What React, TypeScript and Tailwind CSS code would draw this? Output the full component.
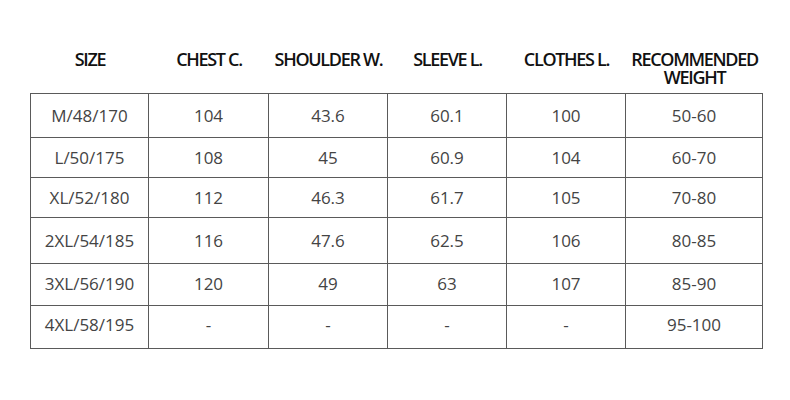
import React from "react";

const headers: string[][] = [
  ["SIZE"],
  ["CHEST C."],
  ["SHOULDER W."],
  ["SLEEVE L."],
  ["CLOTHES L."],
  ["RECOMMENDED", "WEIGHT"],
];

const rows: { h: string; cells: string[] }[] = [
  { h: "h-[44px]", cells: ["M/48/170", "104", "43.6", "60.1", "100", "50-60"] },
  { h: "h-[40px]", cells: ["L/50/175", "108", "45", "60.9", "104", "60-70"] },
  { h: "h-[40px]", cells: ["XL/52/180", "112", "46.3", "61.7", "105", "70-80"] },
  { h: "h-[46px]", cells: ["2XL/54/185", "116", "47.6", "62.5", "106", "80-85"] },
  { h: "h-[42px] pb-[2px]", cells: ["3XL/56/190", "120", "49", "63", "107", "85-90"] },
  { h: "h-[43px] pb-[5px]", cells: ["4XL/58/195", "-", "-", "-", "-", "95-100"] },
];

const cols = "grid grid-cols-[118px_120px_119px_119px_119px_137px]";

export default function App() {
  return (
    <div className="w-[790px] h-[400px] bg-white overflow-hidden font-['Open_Sans','Noto_Sans',sans-serif]">
      <div className={`${cols} ml-[31px] h-[93px] pt-[50px]`}>
        {headers.map((lines, i) => (
          <div
            key={i}
            className="flex flex-col items-center text-[18px] leading-[18px] font-semibold tracking-[-1.3px] text-[#111] whitespace-nowrap"
          >
            {lines.map((l) => (
              <span key={l}>{l}</span>
            ))}
          </div>
        ))}
      </div>
      <div className="ml-[30px] w-[733px] border-l border-t border-[#5a5a5a]">
        {rows.map((r, ri) => (
          <div key={ri} className={`${cols} ${r.h.split(" ")[0]}`}>
            {r.cells.map((c, ci) => (
              <div
                key={ci}
                className={`flex items-center justify-center border-r border-b border-[#5a5a5a] text-[17px] text-[#444] leading-none ${r.h.split(" ")[1] ?? ""}`}
              >
                {c}
              </div>
            ))}
          </div>
        ))}
      </div>
    </div>
  );
}
